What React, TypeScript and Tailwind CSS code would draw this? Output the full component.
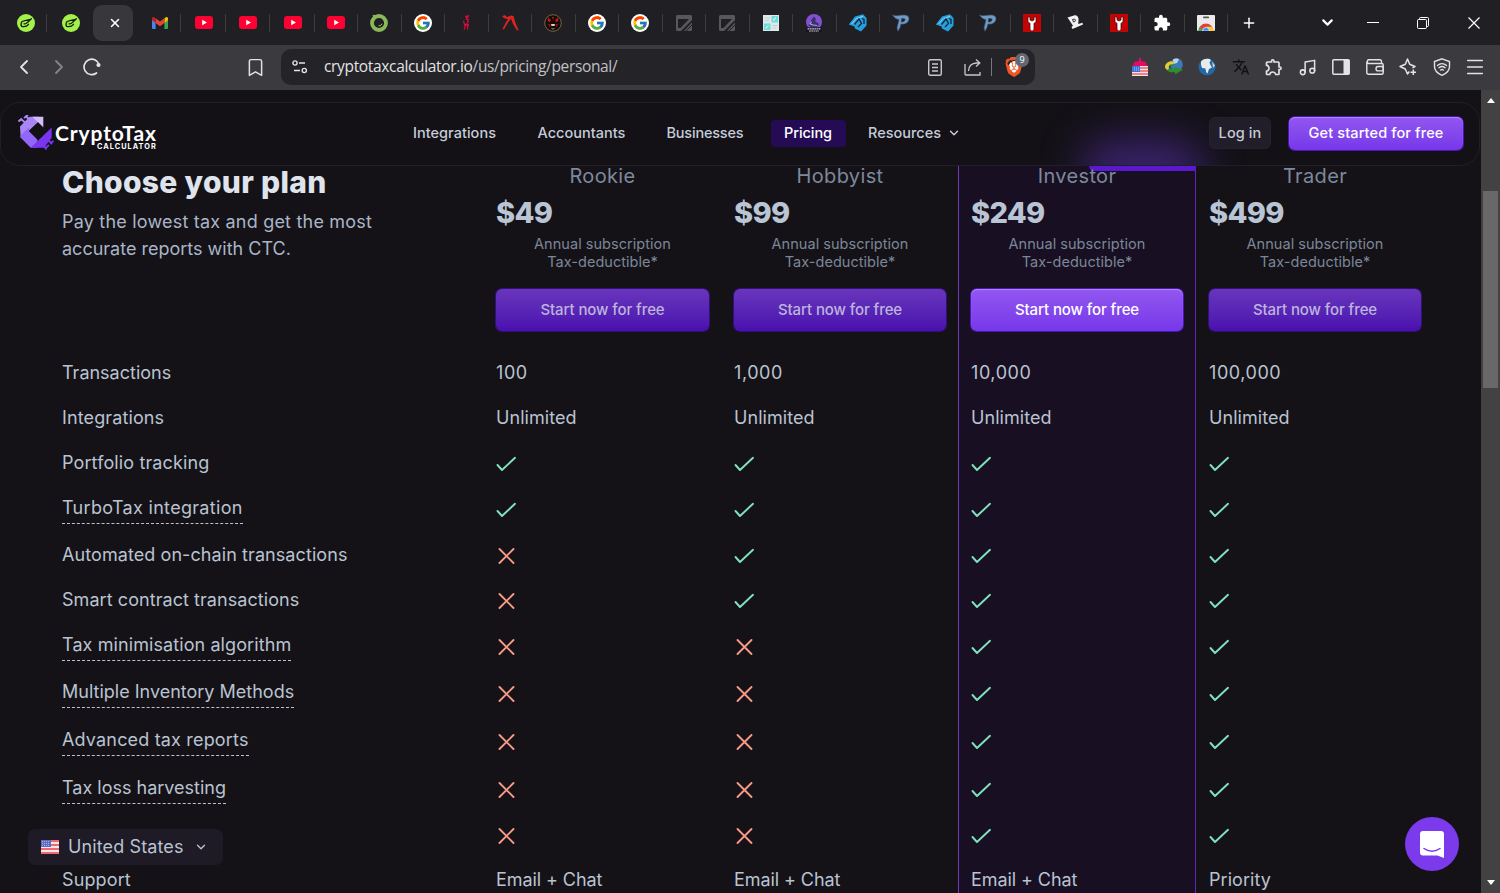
import type { ReactNode } from "react";
import { Bookmark, ChevronDown, ChevronLeft, ChevronRight, Menu, Music, Plus, X } from "lucide-react";
import { FaBrave } from "react-icons/fa6";
import { FcGoogle } from "react-icons/fc";
import { MdExtension, MdOutlineExtension, MdTranslate } from "react-icons/md";

/* ---------- tab favicons ---------- */

const LimeIcon = () => (
  <svg viewBox="0 0 18 18" className="size-[18px]">
    <circle cx="9" cy="9" r="9" fill="#a3f24c" />
    <path d="M13.500 5.500 9 6.300 5 7.500c-1 1.500-1.200 3.500-.3 4.800 2.800.6 5.500-.3 6.800-2M7 9.800c1.300.3 2.600-.4 3.400-1.400l4-3.600" fill="none" stroke="#15210a" strokeWidth="1.300" strokeLinecap="round" strokeLinejoin="round" />
  </svg>
);

const GmailIcon = () => (
  <svg viewBox="0 0 16 12" className="h-3 w-4">
    <path d="M0 1.500V11a1 1 0 0 0 1 1h2.600V5z" fill="#4285f4" />
    <path d="M16 1.500V11a1 1 0 0 1-1 1h-2.600V5z" fill="#34a853" />
    <path d="M12.400 1.200 14 .2A1.300 1.300 0 0 1 16 1.400V3.300l-3.600 2.600z" fill="#fbbc04" />
    <path d="M3.600 1.200 8 4.500l4.400-3.300v4.700L8 9.200 3.600 5.900z" fill="#ea4335" />
    <path d="M0 3.300V1.400A1.300 1.300 0 0 1 2 .2l1.600 1v4.700z" fill="#c5221f" />
  </svg>
);

const YoutubeIcon = () => (
  <svg viewBox="0 0 18 13" className="h-[13px] w-[18px]">
    <rect width="18" height="13" rx="3" fill="#ff0033" />
    <path d="m7.200 3.800 4.800 2.700-4.800 2.700z" fill="#fff" />
  </svg>
);

const RingIcon = () => (
  <svg viewBox="0 0 18 18" className="size-[18px]">
    <circle cx="9" cy="9" r="7" fill="none" stroke="#8bb95a" strokeWidth="3.800" />
    <path d="m2.500.8 4.500.8-3.500 2.200z" fill="#8bb95a" />
    <path d="M8.500 11.800c1.700.1 2.900-.7 3.400-2" fill="none" stroke="#b4da7d" strokeWidth="1" />
  </svg>
);

const GoogleIcon = () => (
  <span className="flex size-[18px] items-center justify-center rounded-full bg-white">
    <FcGoogle className="size-4" />
  </span>
);

const DancerIcon = () => (
  <svg viewBox="0 0 18 18" className="size-[18px]">
    <circle cx="9.500" cy="2.800" r="1.400" fill="#d80d3b" />
    <path d="M9 3.500 7 6.500 8 10l2-1 2 1.500-1.200 5.500-.8.500.3-5-1.500.5-.8 3-1.500 2 1-4.500L6 7.500z" fill="#d80d3b" />
    <path d="m9 5 2 .5V9M11.500 1 10.500 4" fill="none" stroke="#d80d3b" strokeWidth="1.400" />
  </svg>
);

const RedLegsIcon = () => (
  <svg viewBox="0 0 18 18" className="size-[18px]">
    <path d="M1 2.500 3.500 1 6 3l4-1.500 2.500.5 2 7 3 7-1.500.5L12 10 10 4.800 7 8.500 3 15.500 1.500 15 5 8l2-3-3-.5z" fill="#dc2420" />
  </svg>
);

const MaskIcon = () => (
  <svg viewBox="0 0 18 18" className="size-[18px]">
    <circle cx="9" cy="9" r="8.300" fill="#160d0b" stroke="#786347" />
    <path d="M4 3.500 7 6 6 8 3.500 7zM14 3.500 11 6l1 2 2.500-1zM8 3h2L9 6z" fill="#c31a12" />
    <path d="m3.500 9.500 3 1-.5 3zM14.500 9.500l-3 1 .5 3z" fill="#96170f" />
    <path d="M7 10h4l-.5 2h-3z" fill="#d8d0c4" />
    <path d="M6.500 14h5L9 16z" fill="#6e5b43" />
  </svg>
);

const GreyDocIcon = () => (
  <svg viewBox="0 0 16 16" className="size-4">
    <path d="M0 1.500A1.500 1.500 0 0 1 1.500 0h13A1.500 1.500 0 0 1 16 1.500V5L5 16H1.500A1.500 1.500 0 0 1 0 14.500z" fill="#58585b" />
    <path d="M2 4h11L4.500 13H2z" fill="#202024" />
    <path d="M16 7.500v7a1.500 1.500 0 0 1-1.500 1.500H8z" fill="#58585b" />
    <path d="m10 16 6-6" stroke="#202024" />
  </svg>
);

const GridIcon = () => (
  <svg viewBox="0 0 16 16" className="size-4">
    <path fill="#dfe8e8" d="M0 0h16v16H0z" />
    <path fill="#6ddbd8" d="M8.500 1H15v6.500H8.500zM1 8.500h6.500V15H1z" />
    <path d="M2 3h5M2 5.500h4M9.500 10.500h5M9.500 13h4" stroke="#c3d0d0" strokeWidth="1.200" />
    <path d="m2.500 13.500 3-3M10 5.500l3-3" stroke="#c2f3f0" strokeWidth="1.200" />
  </svg>
);

const PurpleBadgeIcon = () => (
  <svg viewBox="0 0 18 18" className="size-[18px]">
    <circle cx="9" cy="8" r="8" fill="#8350cf" />
    <path d="m9 2.500 2 2.500-1 2 4 3-2 3H6l-3-2 4-2-1-3z" fill="#35356b" />
    <path d="M6.500 8 5 10l3 1 4 .5" stroke="#bda4e6" fill="none" />
    <path fill="#17121f" d="M1 13.300h16V18H1z" />
    <path d="M2.500 14.900h13M4 17h10" stroke="#cbc6d5" strokeWidth="1.200" strokeDasharray="1.800 .5" />
  </svg>
);

const BlueArrowIcon = () => (
  <svg viewBox="0 0 20 18" className="h-[18px] w-5">
    <path d="M.8 10.500 7 2.500 15 .3 18.500 4v7.500L13 17.500 7 14.500l-.5-2z" fill="#279fdd" />
    <path d="M3.500 10 8.500 4.500 15 2.300" fill="none" stroke="#8fd8fa" strokeWidth="1" />
    <path d="M6.500 10.500 11 5l2.500 4.500L10 13M14 4.500l2 1V10" fill="none" stroke="#102735" strokeWidth="1.300" />
  </svg>
);

const PIcon = () => (
  <svg viewBox="0 0 18 18" className="size-[18px]">
    <path d="M.5 1C5 3 10 0 15 1.500 18 3 17.500 7 14.500 9c-1.800 1.200-4 1.300-5.500 1l-1 3.500-2 3.800L5 14l2-8.500C5 5.500 2.500 4 .5 1zm9 3.500L9.200 8c2 0 3.800-.6 4-2.300.2-1-1.700-1.400-3.700-1.200z" fill="#6f9ac8" stroke="#37506d" strokeWidth=".6" />
  </svg>
);

const WrenchIcon = () => (
  <svg viewBox="0 0 18 18" className="size-[18px]">
    <path fill="#c40404" d="M0 0h18v18H0z" />
    <path d="M5 2.500v5L7 9.500V15a2 2 0 0 0 4 0V9.500l2-2v-5l-2 1V6L9 7 7 6V3.500z" fill="#fff" stroke="#350000" strokeWidth=".7" />
  </svg>
);

const HatIcon = () => (
  <svg viewBox="0 0 18 18" className="size-[18px]">
    <path d="M1.500 3.500 8 1.500c3-.8 5 2 4.500 5l-.3 3.500 4.300-1.300.5 1.800L6.500 15l-1-2 1.500-1.200z" fill="#f1f1f1" />
    <path d="m6.500 5.500 1.500-.4c1.500-.3 2 1.800.8 2.500L7.500 8z" stroke="#202024" fill="none" strokeWidth=".9" />
  </svg>
);

const WebStoreIcon = () => (
  <svg viewBox="0 0 18 16" className="h-4 w-[18px]">
    <rect width="18" height="16" rx="1" fill="#eceaea" />
    <rect x="6" y="1.500" width="6" height="1.800" rx=".9" fill="#55565a" />
    <path d="M1.500 16a7.500 7.500 0 0 1 15 0z" fill="#dc4437" />
    <path d="M1.500 16a7.500 7.500 0 0 1 1.300-4.200L6.500 16z" fill="#3ba55a" />
    <path d="M16.500 16a7.500 7.500 0 0 0-1.300-4.200H9L12 16z" fill="#fbc930" />
    <path d="M5.500 16a3.500 3.500 0 0 1 7 0z" fill="#3c83ec" stroke="#fff" strokeWidth=".7" />
  </svg>
);

const tabs: ReactNode[] = [
  <YoutubeIcon />, <YoutubeIcon />, <YoutubeIcon />, <YoutubeIcon />, <RingIcon />, <GoogleIcon />, <DancerIcon />,
  <RedLegsIcon />, <MaskIcon />, <GoogleIcon />, <GoogleIcon />, <GreyDocIcon />, <GreyDocIcon />, <GridIcon />,
  <PurpleBadgeIcon />, <BlueArrowIcon />, <PIcon />, <BlueArrowIcon />, <PIcon />, <WrenchIcon />, <HatIcon />,
  <WrenchIcon />, <MdExtension className="size-[18px] text-white" />, <WebStoreIcon />,
];

const Sep = () => <span className="h-[18px] w-px shrink-0 bg-[#3d3d41]" />;

const TabStrip = () => (
  <div className="flex h-[45px] items-center bg-[#202024] pl-[5px]">
    <div className="flex w-[41px] items-center justify-center"><LimeIcon /></div>
    <Sep />
    <div className="flex w-[46px] items-center justify-center pl-px"><LimeIcon /></div>
    <div className="flex h-9 w-10 items-center justify-center rounded-[9px] bg-[#37373c]">
      <span className="flex pl-1"><X className="size-[14px] text-white" strokeWidth={2.700} /></span>
    </div>
    <div className="ml-[5px] flex w-[42px] items-center justify-center pl-px"><GmailIcon /></div>
    <Sep />
    {tabs.map((icon, i) => (
      <div key={i} className={`flex shrink-0 items-center ${i < 3 ? "w-[44.500px] pl-[2px]" : "w-[43.500px]"}`}>
        <span className="flex flex-1 justify-center">{icon}</span>
        <Sep />
      </div>
    ))}
    <div className="flex flex-1 items-center justify-between pr-5 pl-[13px] text-white">
      <Plus className="size-4" strokeWidth={2.200} />
      <div className="flex items-center">
        <ChevronDown className="mr-[31px] size-[17px]" strokeWidth={3} />
        <svg viewBox="0 0 12 12" className="mr-[38px] size-3"><path d="M0 5.500h12" stroke="currentColor" /></svg>
        <svg viewBox="0 0 12 12" className="mr-[39px] size-3" fill="none" stroke="currentColor">
          <rect x=".5" y="2.500" width="9" height="9" rx="1" />
          <path d="M2.500 2.500v-1a1 1 0 0 1 1-1h7a1 1 0 0 1 1 1v7a1 1 0 0 1-1 1h-1" />
        </svg>
        <svg viewBox="0 0 12 12" className="size-3"><path d="m.5.5 11 11m0-11-11 11" stroke="currentColor" strokeWidth="1.200" /></svg>
      </div>
    </div>
  </div>
);

/* ---------- toolbar ---------- */

const FlagRobotIcon = () => (
  <svg viewBox="0 0 18 18" className="size-[18px]">
    <path d="M8 0h2v3l4.500 1 2.500 5H1l2.500-5L8 3z" fill="#e40b62" />
    <path fill="#eee3e8" d="M1 8h16v10H1z" />
    <path d="M9 10h8M9 13h8M1 16h16" stroke="#f0616a" strokeWidth="1.500" />
    <path fill="#3f72d6" d="M1 8h8v6H1z" />
    <path d="M3 10h5M3 12h5" stroke="#a9c5ff" strokeDasharray="1 1" />
  </svg>
);

const GlobeArrowIcon = () => (
  <svg viewBox="0 0 18 18" className="size-[18px]">
    <circle cx="11.500" cy="6.500" r="6.300" fill="#3e78b8" />
    <path d="M8 1.500c2-1.500 5-1 6 0L12 5 8.500 6z" fill="#b6d5e5" />
    <path d="M0 9c2-3.500 7-4.500 9.500-2.500L8 8C6 7 4 7.500 3.500 9c1.500 1.800 4 2.500 6.500 1.500V9l8 2.500-8 5V14c-5 1-9-1-10-5z" fill="#2a8f2c" />
    <path d="M0 9.500C0 4.500 5.500 2 9 4L8 6.500C5 5.500 3 7.500 4 10.500L2 12z" fill="#e3c93c" />
  </svg>
);

const EarthIcon = () => (
  <svg viewBox="0 0 18 18" className="size-[18px]">
    <circle cx="9" cy="9" r="8.500" fill="#2268a6" />
    <path d="M3 3.500C6 .3 11 .3 13 2l-1.500 2.500 1 2.500 1.500 2.500-3 1.500-1.500 4.500L8 14l-.5-3.500L4 10 3 7z" fill="#e7eceb" />
    <path d="m14 3.500 3 4-2 2.500z" fill="#bdd5df" />
  </svg>
);

const PanelIcon = () => (
  <svg viewBox="0 0 18 16" className="h-4 w-[18px]">
    <rect x=".8" y=".8" width="16.400" height="14.400" rx="1" fill="none" stroke="currentColor" strokeWidth="1.500" />
    <path fill="currentColor" d="M11.500 1h5.700v14h-5.700z" />
  </svg>
);

const WalletIcon = () => (
  <svg viewBox="0 0 18 16" className="h-4 w-[18px]" fill="none" stroke="currentColor" strokeWidth="1.400">
    <path d="M15.500 4.500V2.300A1.500 1.500 0 0 0 14 .8H2.700a1.900 1.900 0 0 0 0 3.700h13a1.500 1.500 0 0 1 1.500 1.500v7.700a1.500 1.500 0 0 1-1.500 1.500H2.400A1.600 1.600 0 0 1 .8 13.600V2.700" />
    <path d="M17.200 7.500h-5a2.200 2.200 0 0 0 0 4.400h5z" />
  </svg>
);

const SparkleIcon = () => (
  <svg viewBox="0 0 18 18" className="size-[18px]" fill="none" stroke="currentColor" strokeWidth="1.500" strokeLinejoin="round">
    <path d="M10.300 13.500 8.500 16 6.300 11 1 8.500 6.300 6.200 8.500 1l2.200 5.200L16 8.500l-2.500 1.200" />
    <path d="M14.300 11.500V17M11.500 14.300H17" />
  </svg>
);

const ShieldWifiIcon = () => (
  <svg viewBox="0 0 18 18" className="size-[18px]" fill="none" stroke="currentColor" strokeWidth="1.400" strokeLinecap="round">
    <path d="M9 .8 16.500 3.500v5c0 4-3 7-7.500 8.800C4.500 15.500 1.500 12.500 1.500 8.500v-5z" />
    <path d="M4.500 7.500c2.600-2.300 6.400-2.300 9 0M6 9.800c1.800-1.500 4.200-1.500 6 0M7.600 12c.9-.6 1.900-.6 2.800 0" />
  </svg>
);

const extensions: ReactNode[] = [
  <FlagRobotIcon />, <GlobeArrowIcon />, <EarthIcon />, <MdTranslate className="size-[18px] text-[#111113]" />,
  <MdOutlineExtension className="size-5" />, <Music className="size-[19px]" strokeWidth={1.900} />, <PanelIcon />,
  <WalletIcon />, <SparkleIcon />, <ShieldWifiIcon />, <Menu className="size-[22px]" strokeWidth={1.700} />,
];

const Toolbar = () => (
  <div className="flex h-[45px] items-center bg-[#3b3b3f] pb-px text-[#e3e3e5]">
    <ChevronLeft className="ml-3 size-6" strokeWidth={1.800} />
    <ChevronRight className="ml-[11px] size-6 text-[#858589]" strokeWidth={1.800} />
    <svg viewBox="0 0 18 18" className="ml-3 size-[18px]" fill="none">
      <path d="M13.500 15a7.700 7.700 0 1 1 2.700-8" stroke="currentColor" strokeWidth="1.700" strokeLinecap="round" />
      <circle cx="15.500" cy="7" r="2.100" fill="currentColor" />
    </svg>
    <Bookmark className="ml-[144px] size-[21px]" strokeWidth={1.700} />
    <div className="ml-[15px] flex h-9 w-[754px] items-center rounded-[10px] bg-[#242428] pl-[11px]">
      <svg viewBox="0 0 16 14" className="h-[14px] w-4 shrink-0" fill="none" stroke="currentColor" strokeWidth="1.400">
        <circle cx="3" cy="3" r="2.100" />
        <path d="M7 3h6M2 10.500h6" />
        <circle cx="12.300" cy="10.500" r="2.100" />
      </svg>
      <span className="ml-4 flex-1 font-['Open_Sans',sans-serif] text-[15.500px] tracking-[-0.340px] whitespace-nowrap">
        cryptotaxcalculator.io<span className="text-[#c0c0c5]">/us/pricing/personal/</span>
      </span>
      <svg viewBox="0 0 14 17" className="h-[17px] w-[14px]" fill="none" stroke="#c8c8cc" strokeWidth="1.400">
        <rect x=".7" y=".7" width="12.600" height="15.600" rx="1.500" />
        <path d="M4 5h6M4 8.500h6M4 12h6" />
      </svg>
      <svg viewBox="0 0 18 17" className="ml-[22px] h-[17px] w-[18px]" fill="none" stroke="#c8c8cc" strokeWidth="1.300">
        <path d="M1 5v10a1 1 0 0 0 1 1h14v-3" />
        <path d="M4.500 12c0-4.500 3-8 8-8h3M12 .5 15.800 4 12 7.500" />
      </svg>
      <span className="ml-[9px] h-[18px] w-px bg-[#77777c]" />
      <span className="relative mr-[11px] ml-3 flex size-5 items-center justify-center">
        <span className="absolute h-3 w-[11px] rounded-full bg-white" />
        <FaBrave className="relative size-5 text-[#f25422]" />
        <span className="absolute -top-1 left-[11px] flex size-[14px] items-center justify-center rounded-full bg-[#636773] font-['Open_Sans',sans-serif] text-[9px] text-white">9</span>
      </span>
    </div>
    <div className="ml-[88.500px] flex">
      {extensions.map((icon, i) => (
        <span key={i} className="flex w-[33.500px] items-center justify-center">{icon}</span>
      ))}
    </div>
  </div>
);

/* ---------- site ---------- */

const Logo = () => (
  <div className="ml-[17px] flex w-[140px] items-center text-white">
    <svg viewBox="0 0 36 36" className="size-9 shrink-0">
      <path d="M2 11.500 11.500 1.700h9.500l-1 5.300-9 8.700-8.300 7.300z" fill="#a985f5" />
      <path d="M14.300 1.700h11v10.800z" fill="#d3bcfb" />
      <path d="M2.500 20.500 11 12.500v3.700l8.500 8.500v8h-6.800L2.500 22.500z" fill="#9067f7" />
      <path d="M33.700 12.500v10.200L26 32.700H12.700z" fill="#7936ee" />
      <path d="m11.500 15.500 8.700-8 5 5h4.500L19.300 23.200z" fill="#131116" />
      <path d="M3.500 4.500 7 7.500M7.500.5l3.500 4M.5 6.500 4 3.500M6 3l4-3" stroke="#a985f5" strokeWidth="2" />
      <path d="m25 30 3.500 4.500M30 25l4 4M27.500 33l3.500-3M32.500 28l3-2" stroke="#7936ee" strokeWidth="2" />
    </svg>
    <div className="flex flex-col pt-[7px] pl-px">
      <span className="font-['Lato',sans-serif] text-[21px] leading-[20px] font-bold tracking-[0.900px]">CryptoTax</span>
      <span className="self-end font-['Inter',sans-serif] text-[7.300px] leading-[8px] font-bold tracking-[1.050px]">CALCULATOR</span>
    </div>
  </div>
);

const SiteHeader = () => (
  <header className="relative mt-3 flex h-16 w-[1480px] items-center overflow-hidden rounded-[20px] border border-[#211f26] bg-[#131116] pb-[2px] text-[14.500px] font-medium text-[#c5ccd8]">
    {/* highlight bleeding through from the column underneath */}
    <div className="absolute top-9 left-[1080px] h-16 w-[124px] rounded-full bg-[#5a2fb0]/55 blur-[20px]" />
    <Logo />
    <nav className="ml-[255px] flex items-center whitespace-nowrap">
      <a className="w-[84px] tracking-[0.030px]">Integrations</a>
      <a className="ml-[40.500px] w-[88px] tracking-[0.020px]">Accountants</a>
      <a className="ml-[41px] w-[77px] tracking-[-0.200px]">Businesses</a>
      <a className="ml-[27px] flex h-[27px] w-[75px] items-center justify-center rounded-[4px] bg-[#250b56] tracking-[-0.100px] text-white">Pricing</a>
      <a className="ml-[22.500px] w-[73px]">Resources</a>
      <ChevronDown className="ml-[6px] size-[14px]" strokeWidth={2.500} />
    </nav>
    <div className="relative ml-auto flex items-center pr-4">
      <button className="h-8 w-[62px] rounded-[6px] border border-[#26222d] bg-[#221e29] tracking-[0.100px]">Log in</button>
      <button className="ml-[18px] h-[33px] w-[174px] rounded-[6px] bg-linear-to-b from-[#9256f0] to-[#7637e9] tracking-[0.120px] text-white shadow-[0_0_0_1px_#4a16b8,inset_0_1px_1px_#b28afa]">Get started for free</button>
    </div>
  </header>
);

const plans = [
  { name: "Rookie", price: "$49", featured: false },
  { name: "Hobbyist", price: "$99", featured: false },
  { name: "Investor", price: "$249", featured: true },
  { name: "Trader", price: "$499", featured: false },
];

type Row = { label: string; height: string; values: (string | boolean)[]; hint?: boolean; tracking?: string };

const rows: Row[] = [
  { label: "Transactions", height: "h-[45px]", values: ["100", "1,000", "10,000", "100,000"] },
  { label: "Integrations", height: "h-[45px]", values: ["Unlimited", "Unlimited", "Unlimited", "Unlimited"], tracking: "tracking-[0.120px]" },
  { label: "Portfolio tracking", height: "h-[45px]", values: [true, true, true, true], tracking: "tracking-[0.120px]" },
  { label: "TurboTax integration", height: "h-[47px]", values: [true, true, true, true], hint: true, tracking: "tracking-[0.310px]" },
  { label: "Automated on-chain transactions", height: "h-[45px]", values: [false, true, true, true], tracking: "tracking-[0.080px]" },
  { label: "Smart contract transactions", height: "h-[45px]", values: [false, true, true, true], tracking: "tracking-[0.060px]" },
  { label: "Tax minimisation algorithm", height: "h-[47px]", values: [false, false, true, true], hint: true, tracking: "tracking-[0.090px]" },
  { label: "Multiple Inventory Methods", height: "h-12", values: [false, false, true, true], hint: true },
  { label: "Advanced tax reports", height: "h-12", values: [false, false, true, true], hint: true, tracking: "tracking-[0.170px]" },
  { label: "Tax loss harvesting", height: "h-12", values: [false, false, true, true], hint: true },
  { label: "", height: "h-11", values: [false, false, true, true] },
  { label: "Support", height: "h-[44px]", values: ["Email + Chat", "Email + Chat", "Email + Chat", "Priority"], tracking: "tracking-[0.120px]" },
];

const gridCols = "grid grid-cols-[434px_238px_237px_238px_237px]";
const featuredCell = "border-l border-l-[#6d3ab8] border-r border-r-[#5f27b5] bg-[#180f22]";

const Mark = ({ on }: { on: boolean }) =>
  on ? (
    <svg viewBox="0 0 22 22" className="size-[22px]" fill="none" stroke="#7fe3bd" strokeWidth="1.900" strokeLinecap="round" strokeLinejoin="round">
      <path d="m1.500 12 4.500 5L19 4.800" />
    </svg>
  ) : (
    <svg viewBox="0 0 22 22" className="size-[22px]" fill="none" stroke="#f79a87" strokeWidth="1.900" strokeLinecap="round">
      <path d="m3.500 4 14 14M17.500 4l-14 14" />
    </svg>
  );

const valueTracking = (v: string) => {
  if (v === "Email + Chat") return "tracking-[-0.080px]";
  return /^\d/.test(v) ? "tracking-[0.560px]" : "tracking-[0.050px]";
};

const PricingTable = () => (
  <main className="ml-[49px] text-[18px] text-[#b9c3d1]">
    <div className={`${gridCols} h-[185px]`}>
      <div className="pl-[13px]">
        <h1 className="-mt-px text-[30px] leading-[34px] font-extrabold tracking-[0.320px] whitespace-nowrap text-[#dfe4ec]">Choose your plan</h1>
        <p className="mt-[9px] leading-[27px] whitespace-nowrap text-[#a9b5c7]">
          <span className="tracking-[0.200px]">Pay the lowest tax and get the most</span><br />
          accurate reports with CTC.
        </p>
      </div>
      {plans.map((p) => (
        <div key={p.name} className={`relative text-center ${p.featured ? `pr-3 pl-3 ${featuredCell}` : "pr-3 pl-[13px]"}`}>
          {p.featured && <div className="absolute top-0 -right-px h-[5px] w-[107px] rounded-bl-[5px] bg-[#5b18d1]" />}
          <div className="relative h-[23px] text-[20px] leading-[20px] tracking-[0.350px] text-[#7d899b]">{p.name}</div>
          <div className="h-[46px] text-left text-[29px] leading-[47px] font-extrabold tracking-[-0.700px] text-[#b9c5d5]">{p.price}</div>
          <div className="text-[14.500px] leading-[18px] tracking-[0.040px] text-[#7b8798]">Annual subscription<br />Tax-deductible*</div>
          <button
            className={
              p.featured
                ? "mt-[18px] h-[42px] w-full rounded-[6px] bg-linear-to-b from-[#9256f0] to-[#7637e9] text-[15px] font-medium tracking-[-0.090px] text-white shadow-[0_0_0_1px_#4a16b8,inset_0_1px_1px_#b28afa]"
                : "mt-[18px] h-[42px] w-full rounded-[6px] bg-linear-to-b from-[#6935bd] to-[#4a0eae] text-[15px] font-medium tracking-[-0.090px] text-[#bdb5dc] shadow-[0_0_0_1px_#31107a]"
            }
          >
            Start now for free
          </button>
        </div>
      ))}
    </div>
    {rows.map((row) => (
      <div key={row.label} className={`${gridCols} ${row.height}`}>
        <div className={`flex pl-[13px] whitespace-nowrap ${row.tracking ?? ""} ${row.hint ? "items-start pt-2" : "items-center pb-[2px]"}`}>
          <span className={row.hint ? "border-b border-dashed border-[#b9c3d1] pb-[2px] leading-[27px]" : ""}>{row.label}</span>
        </div>
        {row.values.map((v, i) => (
          <div key={i} className={`flex items-center ${i === 2 ? `pl-3 ${featuredCell}` : "pl-[13px]"}`}>
            {typeof v === "string" ? <span className={`pb-[2px] ${valueTracking(v)}`}>{v}</span> : <Mark on={v} />}
          </div>
        ))}
      </div>
    ))}
  </main>
);

const CountryPicker = () => (
  <div className="absolute top-[739px] left-7 flex h-9 w-[195px] items-center rounded-[7px] bg-[#1e1a26] pl-[13px] text-[18px] text-[#b9c3d1]">
    <svg viewBox="0 0 18 14" className="h-[14px] w-[18px]">
      <path fill="#f1e7e9" d="M0 0h18v14H0z" />
      <path d="M0 1h18M0 5h18M0 9h18M0 13h18" stroke="#ee6a72" strokeWidth="2" />
      <path fill="#5d6dc4" d="M0 0h10v7H0z" />
      <path d="M1 1.500h8M1 3.500h8M1 5.500h8" stroke="#b9c2f0" strokeWidth=".8" strokeDasharray="1 1" />
    </svg>
    <span className="ml-[9px] w-[116px] pb-px tracking-[0.120px] whitespace-nowrap">United States</span>
    <ChevronDown className="ml-[10px] size-[14px]" strokeWidth={2.300} />
  </div>
);

const ChatLauncher = () => (
  <button className="absolute top-[727px] left-[1405px] flex size-[54px] items-center justify-center rounded-full bg-[#7c3aed]">
    <svg viewBox="0 0 24 27" className="h-[27px] w-6">
      <path d="M3 0h18a3 3 0 0 1 3 3v24l-6.500-2.500H3a3 3 0 0 1-3-3V3a3 3 0 0 1 3-3z" fill="#fff" />
      <path d="M4 17.500c4.500 3.500 11.500 3.500 16 0" fill="none" stroke="#7c3aed" strokeWidth="1.500" strokeLinecap="round" />
    </svg>
  </button>
);

const Scrollbar = () => (
  <div className="flex w-[19px] shrink-0 flex-col items-center bg-[#424242]">
    <svg viewBox="0 0 8 5" className="mt-2 h-[5px] w-2"><path d="m4 0 4 5H0z" fill="#fff" /></svg>
    <div className="mt-[88px] h-[197px] w-[15px] bg-[#686868]" />
    <svg viewBox="0 0 8 5" className="mt-auto mb-2 h-[5px] w-2"><path d="m4 5 4-5H0z" fill="#fff" /></svg>
  </div>
);

const App = () => (
  <div className="h-[893px] w-[1500px] overflow-hidden bg-[#151217]">
    <TabStrip />
    <Toolbar />
    <div className="flex h-[803px]">
      <div className="relative flex-1 overflow-hidden font-['Inter',sans-serif]">
        <SiteHeader />
        <PricingTable />
        <CountryPicker />
        <ChatLauncher />
      </div>
      <Scrollbar />
    </div>
  </div>
);

export default App;
